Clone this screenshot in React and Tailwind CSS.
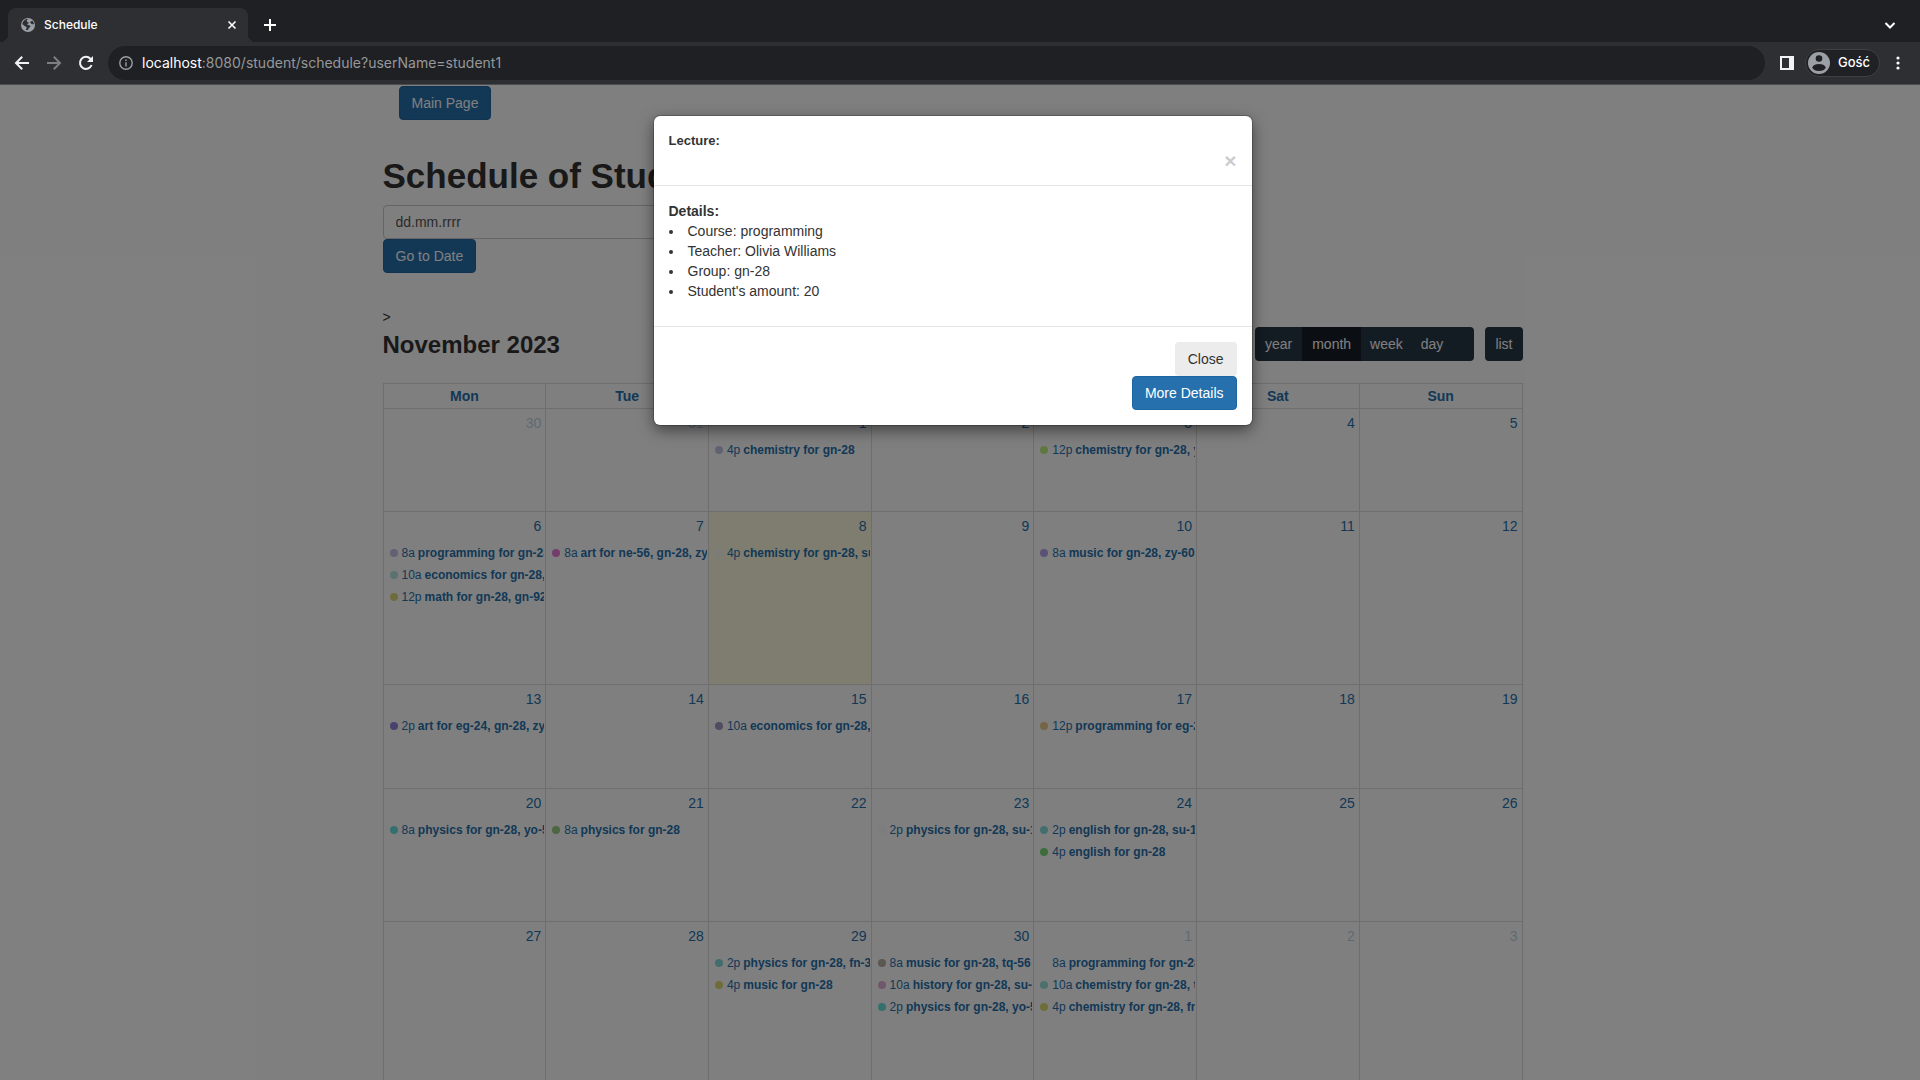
import React from "react";

const weekdays = ["Mon", "Tue", "Wed", "Thu", "Fri", "Sat", "Sun"];

const weeks = [
  {
    height: "h-[103px]",
    days: [
      { n: 30, other: true },
      { n: 31, other: true },
      { n: 1, events: [["#c3c3e8", "4p", "chemistry for gn-28"]] },
      { n: 2 },
      { n: 3, events: [["#bdf080", "12p", "chemistry for gn-28, yo-57"]] },
      { n: 4 },
      { n: 5 },
    ],
  },
  {
    height: "h-[173px]",
    days: [
      {
        n: 6,
        events: [
          ["#c4c0e8", "8a", "programming for gn-28, su-17"],
          ["#b4e6e0", "10a", "economics for gn-28, zy-60"],
          ["#dcd87c", "12p", "math for gn-28, gn-92"],
        ],
      },
      { n: 7, events: [["#e87cd8", "8a", "art for ne-56, gn-28, zy-60"]] },
      { n: 8, today: true, events: [["#f8f6f2", "4p", "chemistry for gn-28, su-17"]] },
      { n: 9 },
      { n: 10, events: [["#b4a4e8", "8a", "music for gn-28, zy-60"]] },
      { n: 11 },
      { n: 12 },
    ],
  },
  {
    height: "h-[104px]",
    days: [
      { n: 13, events: [["#9484d8", "2p", "art for eg-24, gn-28, zy-60"]] },
      { n: 14 },
      { n: 15, events: [["#a498c4", "10a", "economics for gn-28, su-17"]] },
      { n: 16 },
      { n: 17, events: [["#e8cc88", "12p", "programming for eg-24, gn-28"]] },
      { n: 18 },
      { n: 19 },
    ],
  },
  {
    height: "h-[133px]",
    days: [
      { n: 20, events: [["#6ce0dc", "8a", "physics for gn-28, yo-57"]] },
      { n: 21, events: [["#98cc88", "8a", "physics for gn-28"]] },
      { n: 22 },
      { n: 23, events: [["#fafafa", "2p", "physics for gn-28, su-17"]] },
      {
        n: 24,
        events: [
          ["#84dcdc", "2p", "english for gn-28, su-17"],
          ["#78dc78", "4p", "english for gn-28"],
        ],
      },
      { n: 25 },
      { n: 26 },
    ],
  },
  {
    height: "h-[173px]",
    days: [
      { n: 27 },
      { n: 28 },
      {
        n: 29,
        events: [
          ["#84d8dc", "2p", "physics for gn-28, fn-35"],
          ["#dcd870", "4p", "music for gn-28"],
        ],
      },
      {
        n: 30,
        events: [
          ["#b4b0a0", "8a", "music for gn-28, tq-56"],
          ["#e0b0d8", "10a", "history for gn-28, su-17"],
          ["#6ce0d8", "2p", "physics for gn-28, yo-57"],
        ],
      },
      {
        n: 1,
        other: true,
        events: [
          ["#ffffff", "8a", "programming for gn-28"],
          ["#98e0dc", "10a", "chemistry for gn-28, tq-56"],
          ["#dcdc70", "4p", "chemistry for gn-28, fn-35"],
        ],
      },
      { n: 2, other: true },
      { n: 3, other: true },
    ],
  },
];

function Globe() {
  return (
    <svg viewBox="0 0 16 16" className="size-4" aria-hidden="true">
      <circle cx="8" cy="8" r="7" fill="#9aa0a6" />
      <path
        d="M8.500 2.200C7 2.600 6.400 3.400 6.900 4.400c.4.800 1.700.5 1.900 1.300.2.700-1.400.6-1.600 1.500-.2 1 1.700.700 2.600 1.200.9.500.8 1.400-.1 1.900-.9.500-.8 1.300-1.500 2.200-.5.700-1.600.9-2.300.6C5.500 12.300 7 11.300 6.600 10.300 6.200 9.400 4.600 9.500 4 8.600 3.500 7.900 3 7.400 2.300 7.200 2.500 5 4 3 6 2.300 6.800 2 7.700 2 8.500 2.200Z"
        fill="#2e2f33"
      />
      <path
        d="M10.200 4.800c.8-.2 1.500-.8 2.300-1 .8.900 1.300 2 1.400 3.200-1 .6-1.900.4-2.600-.3-.6-.6-1.400-.9-1.100-1.900Z"
        fill="#2e2f33"
      />
    </svg>
  );
}

function BrowserBar() {
  return (
    <header className="relative z-20 font-['Inter',sans-serif] text-white">
      <div className="flex h-[42px] items-end bg-[#1f2023]">
        <div className="size-2 rounded-br-lg bg-[#1f2023] shadow-[4px_4px_0_0_#2e2f33]" />
        <div className="flex h-[34px] w-[240px] items-center rounded-t-lg bg-[#2e2f33] pr-2 pl-3">
          <Globe />
          <span className="ml-2 flex-1 text-xs font-medium">Schedule</span>
          <button aria-label="Close tab" className="flex size-4 items-center justify-center">
            <svg viewBox="0 0 10 10" className="size-[10px]" stroke="white" strokeWidth="1.6">
              <path d="M1.500 1.500 8.500 8.500M8.500 1.500 1.500 8.500" />
            </svg>
          </button>
        </div>
        <div className="size-2 rounded-bl-lg bg-[#1f2023] shadow-[-4px_4px_0_0_#2e2f33]" />
        <button aria-label="New tab" className="ml-[6px] flex h-[34px] w-4 items-center justify-center">
          <svg viewBox="0 0 12 12" className="size-3" stroke="white" strokeWidth="2">
            <path d="M6 0V12M0 6H12" />
          </svg>
        </button>
        <button aria-label="Search tabs" className="mr-6 ml-auto flex h-[34px] w-3 items-center justify-center">
          <svg viewBox="0 0 12 12" className="size-3" fill="none" stroke="white" strokeWidth="2">
            <path d="M1.500 4 6 8.500 10.500 4" />
          </svg>
        </button>
      </div>
      <div className="relative flex h-[43px] items-center border-b border-[#4c4d52] bg-[#2e2f33] pl-[14px]">
        <button aria-label="Back" className="size-4">
          <svg viewBox="0 0 16 16" fill="none" stroke="#f1f3f4" strokeWidth="2">
            <path d="M15 8H2.500M8.200 1.800 2 8l6.200 6.200" />
          </svg>
        </button>
        <button aria-label="Forward" className="ml-4 size-4">
          <svg viewBox="0 0 16 16" fill="none" stroke="#7d7e82" strokeWidth="2">
            <path d="M1 8H13.500M7.800 1.800 14 8l-6.200 6.200" />
          </svg>
        </button>
        <button aria-label="Reload" className="ml-4 size-4">
          <svg viewBox="0 0 16 16" fill="none" stroke="#f1f3f4" strokeWidth="2">
            <path d="M13.600 10A6 6 0 1 1 12.400 3.800L14 5.400" />
            <path d="M15 1V7H9Z" fill="#f1f3f4" stroke="none" />
          </svg>
        </button>
        <div className="ml-[14px] flex h-[34px] flex-1 items-center rounded-full bg-[#1f2023] pl-[11px]">
          <svg viewBox="0 0 14 14" className="size-[14px]" fill="none" stroke="#9aa0a6" strokeWidth="1.4">
            <circle cx="7" cy="7" r="6.200" />
            <path d="M7 6.200V10.400M7 3.500V5" />
          </svg>
          <span className="ml-[9px] text-sm text-[#96989c]">
            <span className="text-white">localhost</span>:8080/student/schedule?userName=student1
          </span>
        </div>
        <button aria-label="Side panel" className="ml-[15px] size-[14px]">
          <svg viewBox="0 0 14 14">
            <path d="M0 0H14V14H0ZM2 2V12H9V2Z" fill="#f1f3f4" fillRule="evenodd" />
          </svg>
        </button>
        <button className="ml-[11px] flex h-7 w-[75px] items-center rounded-full border border-[#3f4044] bg-[#202124] pl-[2px]">
          <svg viewBox="0 0 22 22" className="size-[22px]" aria-hidden="true">
            <circle cx="11" cy="11" r="11" fill="#9aa0a6" />
            <circle cx="11" cy="6.500" r="3.300" fill="#202124" />
            <ellipse cx="11" cy="15.500" rx="6.600" ry="3.500" fill="#202124" />
          </svg>
          <span className="ml-2 text-[13px] font-medium">Gość</span>
        </button>
        <button aria-label="Menu" className="mr-[14px] ml-[10px] flex h-4 w-4 items-center justify-center">
          <svg viewBox="0 0 4 14" className="h-[14px] w-1" fill="white">
            <circle cx="2" cy="2" r="1.600" />
            <circle cx="2" cy="7" r="1.600" />
            <circle cx="2" cy="12" r="1.600" />
          </svg>
        </button>
      </div>
    </header>
  );
}

function PrimaryButton({ children }) {
  return (
    <button className="h-[34px] rounded border border-[#1f66a1] bg-[#2671ad] px-3 text-white">
      {children}
    </button>
  );
}

function DayCell({ day }) {
  return (
    <td className={day.today ? "border border-[#ddd] bg-[#fffadf] p-0 align-top" : "border border-[#ddd] p-0 align-top"}>
      <div className={day.other ? "p-1 text-right opacity-30" : "p-1 text-right"}>
        <a href="#day">{day.n}</a>
      </div>
      <div className="flex flex-col gap-[2px] pt-[3px] pr-px pl-[2px]">
        {(day.events || []).map(([color, time, title]) => (
          <a
            key={time + title}
            href="#event"
            className="flex h-5 items-center overflow-hidden pl-1 text-xs whitespace-nowrap"
          >
            <span className="size-2 shrink-0 rounded-full" style={{ backgroundColor: color }} />
            <span className="mr-[3px] ml-1 shrink-0">{time}</span>
            <span className="min-w-0 flex-1 overflow-hidden font-bold">{title}</span>
          </a>
        ))}
      </div>
    </td>
  );
}

function Calendar() {
  return (
    <section>
      <div className="mb-[22px] flex items-center justify-between">
        <h2 className="pt-[2px] text-2xl font-bold">November 2023</h2>
        <div className="flex gap-[11px] text-white">
          <div className="flex h-[34px] overflow-hidden rounded bg-[#273646]">
            <button className="px-[10px]">year</button>
            <button className="bg-[#161f28] px-[10px]">month</button>
            <button className="px-[9px]">week</button>
            <button className="px-[9px]">day</button>
            <button aria-label="More" className="w-[22px]" />
          </div>
          <button className="h-[34px] rounded bg-[#273646] px-[10px]">list</button>
        </div>
      </div>
      <table className="w-full table-fixed border-collapse text-[#2671ad]">
        <thead>
          <tr className="h-[25px]">
            {weekdays.map((d) => (
              <th key={d} className="border border-[#ddd] p-0 font-bold">
                <a href="#weekday">{d}</a>
              </th>
            ))}
          </tr>
        </thead>
        <tbody>
          {weeks.map((w, i) => (
            <tr key={i} className={w.height}>
              {w.days.map((d) => (
                <DayCell key={d.n} day={d} />
              ))}
            </tr>
          ))}
        </tbody>
      </table>
    </section>
  );
}

function LectureDialog() {
  return (
    <div
      role="dialog"
      aria-labelledby="lecture-title"
      className="w-[598px] rounded-md bg-white shadow-[0_5px_15px_rgba(0,0,0,0.5),0_0_0_1px_rgba(0,0,0,0.2)]"
    >
      <div className="border-b border-[#e5e5e5] px-[15px] pt-4 pb-[14px]">
        <h5 id="lecture-title" className="text-[13px] leading-[18px] font-bold">
          Lecture:
        </h5>
        <div className="flex h-[21px] justify-end">
          <button aria-label="Close" className="text-[21px] leading-[21px] font-bold text-black opacity-20">
            ×
          </button>
        </div>
      </div>
      <div className="p-[15px]">
        <strong>Details:</strong>
        <ul className="mb-[10px] list-inside list-disc">
          <li>Course: programming</li>
          <li>Teacher: Olivia Williams</li>
          <li>Group: gn-28</li>
          <li>Student's amount: 20</li>
        </ul>
      </div>
      <div className="flex flex-col items-end border-t border-[#e5e5e5] p-[15px]">
        <button className="h-[34px] rounded bg-[#ececec] px-[13px]">Close</button>
        <PrimaryButton>More Details</PrimaryButton>
      </div>
    </div>
  );
}

export default function App() {
  return (
    <div className="flex h-screen flex-col overflow-hidden bg-white">
      <BrowserBar />
      <div className="relative min-h-0 flex-1 overflow-hidden pr-[15px] font-['Liberation_Sans',Arial,sans-serif] text-sm leading-5 text-[#333]">
        <main className="mx-auto max-w-[1140px]">
          <nav className="px-4 pt-px">
            <PrimaryButton>Main Page</PrimaryButton>
          </nav>
          <h1 className="mt-9 mb-[9px] text-[35px] leading-10 font-bold">Schedule of Student</h1>
          <form className="flex w-1/2 flex-col items-start">
            <input
              aria-label="Date"
              placeholder="dd.mm.rrrr"
              className="h-[34px] w-full rounded border border-[#ccc] bg-white px-3 placeholder:text-[#555]"
            />
            <PrimaryButton>Go to Date</PrimaryButton>
          </form>
          <p className="mt-[34px]">&gt;</p>
          <Calendar />
        </main>
        <div className="absolute inset-0 flex items-start justify-center bg-black/50 pt-[31px] pr-[15px]">
          <LectureDialog />
        </div>
      </div>
    </div>
  );
}
